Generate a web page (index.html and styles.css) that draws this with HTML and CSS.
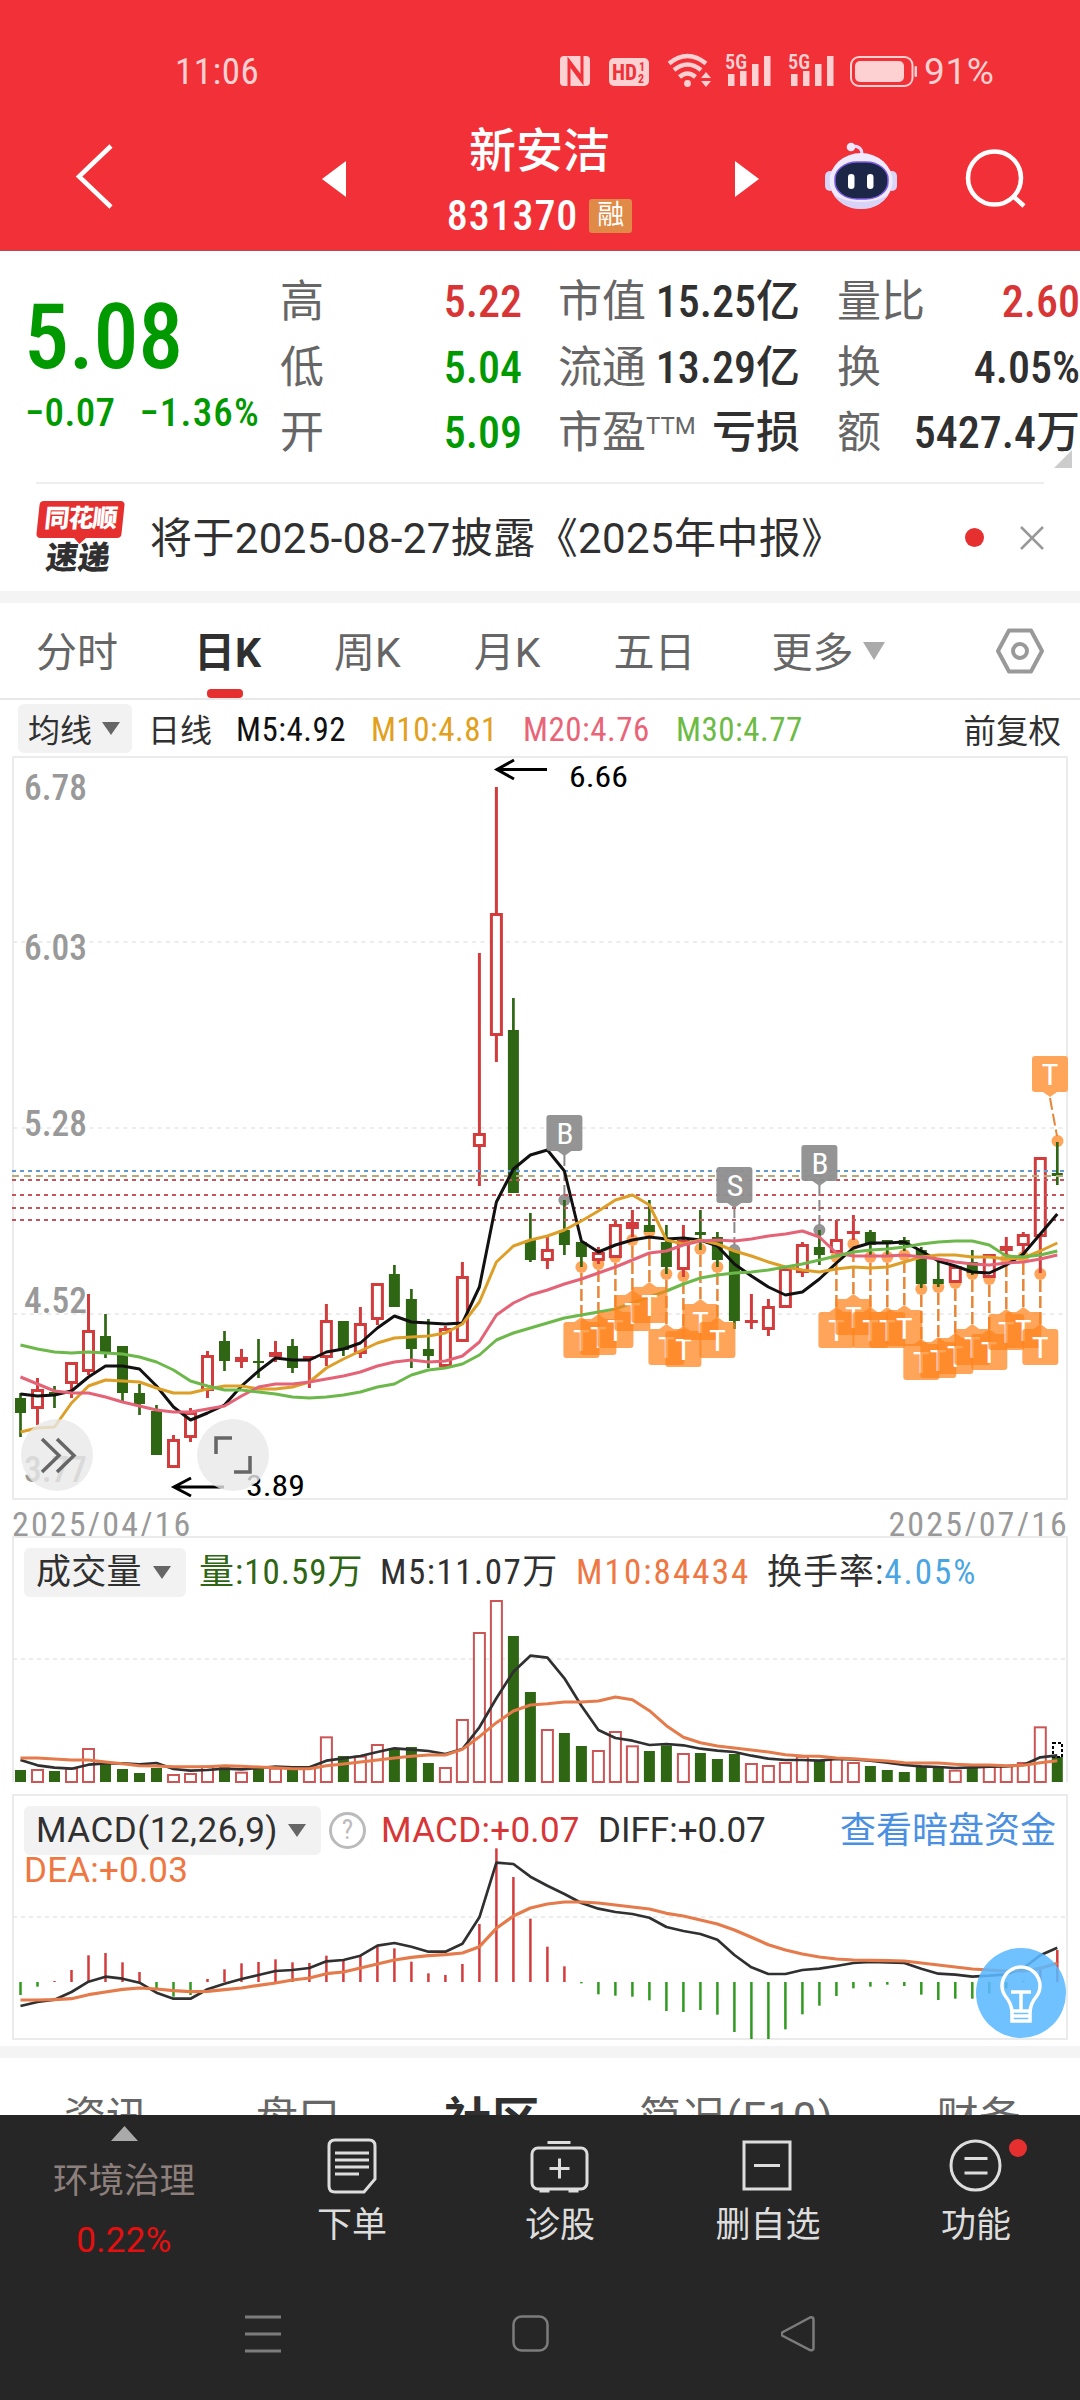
FILE: index.html
```html
<!DOCTYPE html>
<html lang="zh-CN">
<head>
    <meta charset="UTF-8">
    <meta name="viewport" content="width=device-width, initial-scale=1.0">
    <title>新安洁 831370</title>
    <link rel="stylesheet" href="styles.css">
</head>
<body>
    <div class="top">
        <div class="status-bar">
            <span class="time">11:06</span>
            <svg class="status-icons" width="360" height="40" viewBox="558 50 360 40">
                <g fill="#fdd0d2">
                    <rect x="560" y="56" width="30" height="30" rx="4"/>
                    <rect x="609" y="58" width="40" height="28" rx="5"/>
                    <circle cx="687.500" cy="83.500" r="3.400"/>
                    <path d="M701 78l5-6 5 6zM701 81l5 6 5-6z"/>
                    <path d="M728 74h6.500v12h-6.500zM740 71h6.500v15h-6.500zM752 64h6.500v22h-6.500zM764 56h6.500v30h-6.500z"/>
                    <path d="M791 74h6.500v12h-6.500zM803 71h6.500v15h-6.500zM815 64h6.500v22h-6.500zM827 56h6.500v30h-6.500z"/>
                    <rect x="855" y="61" width="49" height="21" rx="5"/>
                    <rect x="914.500" y="66" width="2.500" height="11" rx="1"/>
                    <g font-size="20" font-weight="600">
                        <text x="725" y="69" textLength="22" lengthAdjust="spacingAndGlyphs">5G</text>
                        <text x="788" y="69" textLength="22" lengthAdjust="spacingAndGlyphs">5G</text>
                    </g>
                </g>
                <g fill="none" stroke="#fdd0d2">
                    <rect x="851" y="57" width="61.500" height="29" rx="8" stroke-width="2"/>
                    <path d="M669 63.500q18.500-15 37 0M674 70q13.500-11 27 0M679.500 77q8-7 16 0" stroke-width="4.500"/>
                </g>
                <path d="M569 86V61l12 16M582 56v25l-11-15" fill="none" stroke="#f13037" stroke-width="3"/>
                <g fill="#f13037" font-weight="700">
                    <text x="612" y="80" font-size="22" textLength="25" lengthAdjust="spacingAndGlyphs">HD</text>
                    <text x="639" y="71" font-size="12">1</text>
                    <text x="638" y="83" font-size="12">2</text>
                </g>
            </svg>
            <span class="battery">91%</span>
        </div>
        <div class="title-bar">
            <svg class="back" width="40" height="68" viewBox="75 142 40 68"><path d="M111 146L79 176.500 111 207" fill="none" stroke="#fff" stroke-width="4.500"/></svg>
            <svg class="prev" width="24" height="36"><path d="M24 0v36L0 18z" fill="#fff"/></svg>
            <div class="stock">
                <div class="stock-name">新安洁</div>
                <div class="stock-code"><span class="code">831370</span><span class="badge">融</span></div>
            </div>
            <svg class="next" width="24" height="36"><path d="M0 0v36l24-18z" fill="#fff"/></svg>
            <svg class="robot" width="74" height="70" viewBox="824 142 74 70">
                <path d="M862 154q0-8-9-8" fill="none" stroke="#e6d9fb" stroke-width="3"/>
                <circle cx="851" cy="147" r="4.300" fill="#f0e8ff"/>
                <rect x="825" y="171" width="10" height="20" rx="5" fill="#d9d5f8"/>
                <rect x="887" y="171" width="10" height="20" rx="5" fill="#d9d5f8"/>
                <ellipse cx="861" cy="181" rx="31.500" ry="28" fill="#efeafd"/>
                <path d="M834 195q9 14 27 14t27-14q-11 7-27 7t-27-7z" fill="#d8d2f6"/>
                <rect x="835" y="162" width="53" height="37" rx="22" ry="17" fill="#1c2748" stroke="#7d5be0" stroke-width="1.500"/>
                <rect x="848" y="174" width="6.500" height="15" rx="3.200" fill="#fff"/>
                <rect x="867" y="174" width="6.500" height="15" rx="3.200" fill="#fff"/>
            </svg>
            <svg class="search" width="64" height="64" viewBox="963 147 64 64"><g fill="none" stroke="#fff" stroke-width="4.500"><circle cx="994.500" cy="178" r="26.500"/><path d="M1013 196l11 10"/></g></svg>
        </div>
    </div>

    <div class="quote">
        <div class="price-box">
            <div class="price">5.08</div>
            <div class="change"><span>−0.07</span><span>−1.36%</span></div>
        </div>
        <div class="col col-1">
            <div class="item"><span class="label">高</span><b class="red">5.22</b></div>
            <div class="item"><span class="label">低</span><b class="green">5.04</b></div>
            <div class="item"><span class="label">开</span><b class="green">5.09</b></div>
        </div>
        <div class="col col-2">
            <div class="item"><span class="label">市值</span><b>15.25亿</b></div>
            <div class="item"><span class="label">流通</span><b>13.29亿</b></div>
            <div class="item"><span class="label">市盈<sup>TTM</sup></span><b>亏损</b></div>
        </div>
        <div class="col col-3">
            <div class="item"><span class="label">量比</span><b class="red">2.60</b></div>
            <div class="item"><span class="label">换</span><b>4.05%</b></div>
            <div class="item"><span class="label">额</span><b>5427.4万</b></div>
        </div>
        <div class="corner"></div>
    </div>

    <div class="news">
        <div class="logo">
            <div class="logo-top">同花顺</div>
            <div class="logo-bottom">速递</div>
        </div>
        <div class="news-text">将于2025-08-27披露《2025年中报》</div>
        <span class="news-dot"></span>
        <svg width="24" height="24"><path d="M1 1l22 22M23 1L1 23" stroke="#999" stroke-width="2.500"/></svg>
    </div>

    <div class="tabs">
        <span class="tab t1">分时</span>
        <span class="tab t2 active">日K</span>
        <span class="tab t3">周K</span>
        <span class="tab t4">月K</span>
        <span class="tab t5">五日</span>
        <span class="tab t6">更多</span>
        <svg class="more" width="22" height="18"><path d="M0 0h22L11 18z" fill="#aaa"/></svg>
        <svg class="gear" width="50" height="46" viewBox="0 0 50 46"><g fill="none" stroke="#999" stroke-width="4"><path d="M14 2.500h22L47 23 36 43.500H14L3 23z" stroke-linejoin="round"/><circle cx="25" cy="23" r="7"/></g></svg>
    </div>

    <div class="ma-row">
        <span class="pill">均线<svg width="18" height="13"><path d="M0 0h18L9 13z" fill="#666"/></svg></span>
        <span class="ma-type">日线</span>
        <span class="ma m5">M5:4.92</span>
        <span class="ma m10">M10:4.81</span>
        <span class="ma m20">M20:4.76</span>
        <span class="ma m30">M30:4.77</span>
        <span class="fq">前复权</span>
    </div>

    <div class="chart kline"><svg id="kline" width="1080" height="745" viewBox="0 756 1080 745"></svg></div>

    <div class="dates"><span>2025/04/16</span><span>2025/07/16</span></div>

    <div class="chart volume">
        <svg id="volume" width="1080" height="250" viewBox="0 1536 1080 250"></svg>
        <div class="legend">
            <span class="pill"><span>成交量</span><svg width="18" height="13"><path d="M0 0h18L9 13z" fill="#666"/></svg></span>
            <span class="v1">量:10.59万</span>
            <span class="v2">M5:11.07万</span>
            <span class="v3">M10:84434</span>
            <span class="v4">换手率:<em>4.05%</em></span>
        </div>
    </div>

    <div class="chart macd">
        <svg id="macd" width="1080" height="248" viewBox="0 1794 1080 248"></svg>
        <div class="legend">
            <span class="pill"><span>MACD(12,26,9)</span><svg width="18" height="13"><path d="M0 0h18L9 13z" fill="#666"/></svg></span>
            <span class="help">?</span>
            <span class="d1">MACD:+0.07</span>
            <span class="d2">DIFF:+0.07</span>
            <span class="link">查看暗盘资金</span>
        </div>
        <div class="dea">DEA:+0.03</div>
        <div class="bulb">
            <svg width="90" height="90" viewBox="976 1948 90 90"><g fill="none" stroke="#fff" stroke-width="3.500"><path d="M1012 2011q-1-8-6-14-4-5-4-11a19 19 0 0 1 38 0q0 6-4 11-5 6-6 14z"/><path d="M1012 2011v10h18v-10M1012 2016h18M1021 2011v-19M1011 1992h20"/></g></svg>
        </div>
    </div>

    <div class="sub-tabs">
        <span class="s1">资讯</span>
        <span class="s2">盘口</span>
        <span class="s3">社区</span>
        <span class="s4">简况(F10)</span>
        <span class="s5">财务</span>
    </div>

    <div class="bottom">
        <div class="actions">
            <div class="sector">
                <svg width="27" height="15"><path d="M0 15L13.500 0 27 15z" fill="#aaa"/></svg>
                <div class="sector-name">环境治理</div>
                <div class="sector-pct">0.22%</div>
            </div>
            <div class="action a1">
                <svg width="60" height="60" viewBox="322 2135 60 60"><g fill="none" stroke="#ddd" stroke-width="3"><path d="M335 2140h34q6 0 6 6v33l-11 13h-29q-6 0-6-6v-40q0-6 6-6z"/><path d="M335 2153h34M335 2160h34M335 2167h34M335 2174h24"/></g></svg>
                <span>下单</span>
            </div>
            <div class="action a2">
                <svg width="60" height="60" viewBox="530.500 2135 60 60"><g fill="none" stroke="#ddd" stroke-width="3"><rect x="532.500" y="2148" width="55" height="41" rx="6"/><path d="M548 2142.500h23M550 2168.500h20M560 2158.500v20M540 2191h10M569 2191h10"/></g></svg>
                <span>诊股</span>
            </div>
            <div class="action a3">
                <svg width="60" height="60" viewBox="738 2135 60 60"><g fill="none" stroke="#ddd" stroke-width="3"><path d="M744 2142h46v47h-46zM754 2165.500h26"/></g></svg>
                <span>删自选</span>
            </div>
            <div class="action a4">
                <svg width="60" height="60" viewBox="945.500 2135 60 60"><g fill="none" stroke="#ddd" stroke-width="3"><circle cx="975" cy="2165.500" r="24.500"/><path d="M964 2158.500h23M964 2173h23"/></g></svg>
                <span>功能</span>
                <i class="red-dot"></i>
            </div>
        </div>
        <div class="nav">
            <svg width="36" height="38"><path d="M0 2h36M0 19h36M0 36h36" stroke="#7c7c7c" stroke-width="3"/></svg>
            <svg width="38" height="38"><rect x="1.500" y="1.500" width="34" height="34" rx="8" fill="none" stroke="#7c7c7c" stroke-width="2.500"/></svg>
            <svg width="38" height="38"><path d="M29 2.500L2 17q-3 2 0 4l27 14q3.500 1 3.500-2V5q0-3.500-3.500-2.500z" fill="none" stroke="#7c7c7c" stroke-width="2.500"/></svg>
        </div>
    </div>

    <script src="charts.js"></script>
</body>
</html>
```

FILE: styles.css
```css
* {
    box-sizing: border-box;
}
body {
    margin: 0;
    width: 1080px;
    height: 2400px;
    overflow: hidden;
    background: #fff;
    color: #303030;
    font-family: Roboto, "Noto Sans CJK SC", sans-serif;
    font-stretch: 85%;
    white-space: nowrap;
}
svg {
    display: block;
    flex: none;
}
i, em {
    font-style: normal;
}

/* header */
.top {
    height: 251px;
    background: #f13037;
    color: #fff;
    border-bottom: 1px solid #b94a50;
}
.status-bar {
    height: 110px;
    display: flex;
    align-items: flex-start;
    padding-top: 50px;
    color: #fdd0d2;
    font-size: 37px;
    line-height: 43px;
}
.time {
    width: 383px;
    margin-left: 175px;
    letter-spacing: 0.5px;
}
.battery {
    margin-left: 6px;
    font-stretch: 95%;
    letter-spacing: 0.6px;
}
.title-bar {
    display: flex;
    align-items: flex-start;
}
.back {
    margin: 32px 0 0 75px;
}
.prev {
    margin: 51px 0 0 207px;
}
.stock {
    width: 389px;
    text-align: center;
}
.stock-name {
    height: 80px;
    margin-left: -2px;
    line-height: 81px;
    font-size: 47px;
    font-weight: 500;
}
.stock-code {
    display: flex;
    justify-content: center;
    align-items: center;
    height: 50px;
    padding-top: 1px;
    gap: 11px;
    margin-left: -2px;
}
.code {
    font-size: 42px;
    font-weight: 500;
    letter-spacing: 0.9px;
}
.badge {
    width: 43px;
    height: 34px;
    line-height: 33px;
    border-radius: 3px;
    background: #e08a48;
    font-size: 27px;
}
.next {
    margin-top: 51px;
}
.robot {
    margin: 32px 0 0 65px;
}
.search {
    margin: 37px 0 0 65px;
}

/* quote */
.quote {
    position: relative;
    display: flex;
    height: 233px;
    padding-top: 18px;
}
.quote::after {
    content: "";
    position: absolute;
    left: 36px;
    right: 36px;
    bottom: 0;
    height: 2px;
    background: #eee;
}
.price-box {
    width: 280px;
    padding-left: 24px;
    color: #009900;
    font-weight: 500;
}
.price {
    height: 110px;
    line-height: 137px;
    font-size: 90px;
    letter-spacing: -0.3px;
}
.change {
    display: flex;
    gap: 24px;
    padding: 12px 0 0 1px;
    font-size: 39px;
    line-height: 44px;
    letter-spacing: 0.4px;
}
.change span + span {
    letter-spacing: 1.2px;
}
.col {
    font-size: 44px;
}
.col-1 {
    width: 242px;
}
.col-2 {
    width: 242px;
    margin-left: 36px;
}
.col-3 {
    width: 243px;
    margin-left: 37px;
}
.item {
    display: flex;
    justify-content: space-between;
    height: 65.5px;
    line-height: 66px;
}
.item .label {
    color: #666;
}
.item b {
    font-weight: 500;
}
.item sup {
    font-size: 24px;
    font-stretch: 100%;
    line-height: 0;
    vertical-align: 14px;
}
.red {
    color: #d83636;
}
.green {
    color: #009900;
}
.corner {
    position: absolute;
    right: 8px;
    bottom: 16px;
    border-left: 18px solid transparent;
    border-bottom: 18px solid #ccc;
}

/* news */
.news {
    display: flex;
    align-items: center;
    height: 119px;
    padding: 0 36px;
    border-bottom: 12px solid #f4f4f4;
}
.logo {
    width: 89px;
    height: 73px;
    text-align: center;
}
.logo-top {
    position: relative;
    width: 85px;
    height: 37px;
    margin-left: 2px;
    border-radius: 4px;
    background: #e63030;
    color: #fff;
    font-size: 25px;
    font-weight: 900;
    line-height: 35px;
    letter-spacing: -1px;
    transform: skewX(-6deg);
}
.logo-top::after {
    content: "";
    position: absolute;
    left: 38px;
    top: 37px;
    border: 6px solid transparent;
    border-top-color: #e63030;
    border-bottom: 0;
}
.logo-bottom {
    margin-left: -5px;
    font-size: 32px;
    font-weight: 900;
    line-height: 41px;
    transform: skewX(-7deg);
}
.news-text {
    width: 815px;
    margin: -7px 0 0 25px;
    font-size: 42px;
    font-stretch: 100%;
    letter-spacing: 0.4px;
}
.news-dot {
    width: 19px;
    height: 19px;
    margin-right: 36px;
    border-radius: 50%;
    background: #e63030;
}

/* period tabs */
.tabs {
    display: flex;
    align-items: center;
    height: 97px;
    padding: 0 36px;
    border-bottom: 2px solid #e8e8e8;
    color: #666;
    font-size: 41px;
    font-stretch: 100%;
}
.tab {
    margin-top: -3px;
}
.t2, .t6 {
    margin-left: 76px;
}
.t3, .t4, .t5 {
    margin-left: 73px;
}
.tab.active {
    position: relative;
    color: #303030;
    font-weight: 700;
}
.tab.active::after {
    content: "";
    position: absolute;
    left: 13px;
    bottom: -19px;
    width: 36px;
    height: 9px;
    border-radius: 4px;
    background: #e63030;
}
.more {
    margin-left: 9px;
}
.gear {
    margin: 0 -1px 0 auto;
}

/* moving average legend */
.ma-row {
    display: flex;
    align-items: center;
    height: 56px;
    padding: 0 19px 0 18px;
    font-size: 32px;
}
.pill {
    display: flex;
    align-items: center;
    justify-content: space-between;
    height: 49px;
    padding: 0 12px;
    border-radius: 6px;
    background: #f2f2f2;
}
.ma-row .pill {
    width: 114px;
    padding: 0 12px 0 10px;
}
.ma-type {
    width: 88px;
    margin-left: 16px;
}
.ma {
    width: 135px;
    padding-top: 2px;
    font-size: 33px;
    font-weight: 450;
    letter-spacing: 0.5px;
}
.m5 { color: #111; }
.m10 { color: #e2a01c; width: 152px; }
.m20 { color: #ea6478; width: 153px; }
.m30 { color: #6cbb45; width: 153px; }
.fq {
    margin-left: auto;
    font-size: 32.5px;
}

/* charts */
.chart {
    position: relative;
}
.chart > svg {
    position: absolute;
    left: 0;
    top: 0;
}
.kline {
    height: 745px;
}
.dates {
    display: flex;
    justify-content: space-between;
    height: 35px;
    padding: 3px 11px 0 12px;
    color: #999;
    font-size: 34px;
    letter-spacing: 2.1px;
    line-height: 41px;
}
.volume {
    height: 258px;
    padding: 12px 0 0 24px;
}
.macd {
    height: 264px;
    padding: 12px 24px 0;
    border-bottom: 12px solid #f4f4f4;
}
.legend {
    position: relative;
    display: flex;
    align-items: center;
    font-size: 35px;
    line-height: 40px;
}
.volume .pill {
    width: 162px;
    padding-right: 15px;
    letter-spacing: 0.2px;
}
.macd .pill {
    width: 297px;
    padding-right: 15px;
    font-stretch: 100%;
    letter-spacing: 0.5px;
}
.volume .legend {
    letter-spacing: 1px;
}
.v1 { width: 181px; margin-left: 13px; color: #2f6614; }
.v2 { width: 196px; letter-spacing: 1.5px; }
.v3 { width: 191px; color: #ee7742; letter-spacing: 2.1px; }
.v4 em { color: #4aa5e2; letter-spacing: 2px; }
.help {
    width: 37px;
    height: 37px;
    margin-left: 8px;
    border: 3px solid #bbb;
    border-radius: 50%;
    color: #bbb;
    font-size: 27px;
    line-height: 31px;
    text-align: center;
}
.d1 { width: 217px; margin-left: 15px; color: #d83636; letter-spacing: 0.3px; }
.d1, .d2, .dea {
    font-stretch: 100%;
}
.link {
    margin-left: auto;
    color: #4a90e2;
    font-size: 36px;
}
.dea {
    position: relative;
    color: #ee7742;
    font-size: 35px;
    letter-spacing: 0.2px;
    line-height: 32px;
}
.bulb {
    position: absolute;
    left: 976px;
    top: 154px;
    width: 90px;
    height: 90px;
    border-radius: 50%;
    background: rgba(90, 184, 255, 0.87);
}

/* content tabs, cut off by the bottom bar */
.sub-tabs {
    position: relative;
    display: flex;
    height: 57px;
    padding: 30px 0 0 64px;
    overflow: hidden;
    color: #666;
    font-size: 42px;
    font-stretch: 100%;
    line-height: 60px;
}
.s2 { margin-left: 108px; }
.s3 { margin-left: 104px; color: #303030; font-size: 48px; font-weight: 700; line-height: 65px; }
.s4 { margin-left: 99px; letter-spacing: 1.7px; }
.s5 { margin-left: 102px; }

/* bottom bar */
.bottom {
    height: 285px;
    background: #262626;
    color: #ddd;
}
.actions {
    display: flex;
    height: 200px;
    font-size: 35px;
}
.sector {
    display: flex;
    flex-direction: column;
    align-items: center;
    width: 248px;
    padding-top: 11px;
}
.sector-name {
    margin-top: 14px;
    color: #8d7f7b;
    font-size: 35.5px;
    line-height: 52px;
}
.sector-pct {
    margin-top: 8px;
    color: #e60f0f;
    font-stretch: 100%;
    letter-spacing: 0.3px;
    line-height: 52px;
}
.action {
    position: relative;
    display: flex;
    flex-direction: column;
    align-items: center;
    width: 208px;
    padding-top: 20px;
}
.action span {
    line-height: 61px;
}
.red-dot {
    position: absolute;
    left: 137px;
    top: 24px;
    width: 18px;
    height: 18px;
    border-radius: 50%;
    background: #e63030;
}
.nav {
    display: flex;
    gap: 231px;
    padding-left: 245px;
}
```

FILE: charts.js
```js
var STEP = 16.997;
var RED = '#d23c3c', GREEN = '#2f6614';

function x(i) {
    return +(20.5 + i * STEP).toFixed(1);
}
function line(x1, y1, x2, y2, color, w, dash) {
    return '<line x1="' + x1 + '" y1="' + y1 + '" x2="' + x2 + '" y2="' + y2 + '" stroke="' + color + '" stroke-width="' + w + '"' + (dash ? ' stroke-dasharray="' + dash + '"' : '') + '/>';
}
function rect(rx, ry, w, h, attrs) {
    return '<rect x="' + rx + '" y="' + ry + '" width="' + w + '" height="' + h + '" ' + attrs + '/>';
}
function curve(values, toY, color, w) {
    var pts = values.map(function (v, i) { return x(i) + ',' + toY(v).toFixed(1); }).join(' ');
    return '<polyline points="' + pts + '" fill="none" stroke="' + color + '" stroke-width="' + w + '" stroke-linejoin="round"/>';
}
function text(tx, ty, str, size, width, color, extra) {
    return '<text x="' + tx + '" y="' + ty + '" font-size="' + size + '" fill="' + color + '" textLength="' + width + '" lengthAdjust="spacingAndGlyphs" ' + (extra || '') + '>' + str + '</text>';
}

// candles: up/down, high, body top, body bottom, low
var candles = [
    [0,1393,1398,1413,1437],[1,1378,1389,1409,1425],[0,1386,1392,1394,1408],[1,1362,1362,1384,1398],
    [1,1294,1330,1372,1375],[0,1314,1336,1353,1358],[0,1346,1346,1393,1401],[0,1384,1393,1404,1415],
    [0,1405,1411,1455,1455],[1,1435,1439,1468,1468],[1,1408,1412,1438,1442],[1,1351,1355,1391,1398],
    [0,1331,1341,1361,1371],[1,1349,1357,1362,1368],[0,1339,1361,1363,1378],[1,1341,1352,1357,1362],
    [0,1339,1346,1368,1373],[1,1356,1356,1358,1388],[1,1304,1320,1358,1366],[0,1321,1321,1350,1356],
    [1,1307,1323,1354,1358],[1,1283,1283,1320,1325],[0,1265,1274,1307,1307],[0,1289,1299,1349,1368],
    [0,1319,1349,1356,1368],[1,1326,1328,1367,1367],[1,1262,1276,1342,1342],[1,953,1133,1147,1186],
    [1,787,913,1036,1062],[0,998,1030,1193,1193],[0,1213,1240,1260,1262],[1,1237,1249,1261,1269],
    [0,1200,1230,1245,1255],[0,1242,1242,1257,1267],[1,1247,1252,1261,1264],[1,1220,1224,1258,1258],
    [1,1210,1222,1229,1237],[0,1200,1225,1232,1232],[0,1225,1242,1267,1274],[1,1225,1240,1270,1277],
    [0,1210,1232,1235,1250],[0,1232,1237,1260,1267],[0,1251,1251,1321,1329],[1,1294,1320,1322,1329],
    [1,1299,1306,1330,1336],[1,1268,1268,1308,1308],[1,1242,1244,1273,1277],[0,1230,1247,1255,1265],
    [1,1220,1239,1253,1253],[1,1215,1231,1233,1240],[0,1230,1232,1245,1255],[0,1240,1240,1242,1255],
    [0,1237,1240,1245,1251],[0,1247,1250,1284,1288],[0,1262,1279,1284,1287],[1,1265,1266,1283,1283],
    [0,1250,1262,1273,1275],[1,1254,1254,1278,1278],[1,1237,1246,1251,1255],[1,1232,1234,1246,1255],
    [1,1157,1157,1237,1273],[0,1142,1173,1176,1185]
];
var m5 = [1394,1396,1395,1391,1377,1366,1366,1369,1386,1407,1420,1413,1405,1386,1371,1358,1360,1360,1352,1349,1343,1328,1316,1322,1323,1324,1323,1287,1202,1169,1155,1150,1171,1241,1252,1245,1240,1237,1239,1238,1240,1246,1264,1276,1287,1295,1292,1279,1263,1248,1243,1243,1242,1251,1261,1266,1272,1273,1265,1254,1234,1214];
var m10 = [1432,1428,1427,1403,1386,1380,1381,1382,1388,1393,1393,1389,1386,1386,1389,1389,1387,1382,1368,1359,1351,1343,1338,1337,1336,1333,1324,1302,1262,1246,1240,1236,1230,1221,1211,1200,1195,1205,1240,1244,1240,1244,1251,1256,1262,1267,1270,1272,1269,1267,1268,1267,1262,1257,1255,1255,1257,1257,1259,1258,1251,1243];
var m20 = [1377,1384,1391,1393,1393,1397,1402,1406,1410,1412,1412,1409,1406,1396,1387,1384,1384,1382,1379,1376,1372,1366,1362,1360,1362,1361,1356,1342,1315,1303,1295,1290,1284,1279,1273,1267,1260,1253,1251,1245,1241,1240,1241,1239,1236,1234,1231,1237,1253,1256,1256,1256,1255,1257,1259,1262,1264,1265,1263,1262,1259,1255];
var m30 = [1345,1349,1352,1353,1352,1353,1354,1357,1362,1370,1381,1386,1390,1390,1392,1394,1397,1398,1397,1395,1392,1387,1384,1375,1370,1368,1364,1355,1340,1333,1328,1323,1318,1315,1312,1309,1303,1297,1291,1284,1278,1275,1273,1272,1270,1267,1264,1260,1256,1252,1250,1249,1247,1244,1242,1241,1241,1245,1256,1257,1255,1251];
// T marks below the candles: index, dot y
var tMarks = [[33,1267],[34,1264],[35,1257],[36,1240],[37,1232],[38,1274],[39,1276],[40,1249],[41,1267],[48,1257],[49,1244],[50,1257],[51,1257],[52,1255],[53,1289],[54,1287],[55,1283],[56,1274],[57,1279],[58,1259],[59,1257],[60,1274]];
// B / S marks above: index, box top, dot y, letter
var sideMarks = [[32,1115,1200,'B'],[42,1167,1250,'S'],[47,1145,1230,'B']];

function same(v) { return v; }

function drawKline() {
    var s = '';
    [942, 1128, 1314].forEach(function (y) { s += line(13, y, 1067, y, '#e6e6e6', 1.5, '4 4.500'); });
    s += rect(13, 757, 1054, 742, 'fill="none" stroke="#ebebeb" stroke-width="2"');
    [[800,'6.78'],[960,'6.03'],[1136,'5.28'],[1313,'4.52'],[1482,'3.77']].forEach(function (l) {
        s += text(24, l[0], l[1], 37, 63, '#999', 'font-weight="500"');
    });

    tMarks.forEach(function (m) {
        s += '<circle cx="' + x(m[0]) + '" cy="' + m[1] + '" r="6" fill="#ffa55a"/>';
        s += line(x(m[0]), m[1] + 6, x(m[0]), m[1] + 52, '#e88638', 2.5, '12 4');
    });
    sideMarks.forEach(function (m) {
        s += '<circle cx="' + x(m[0]) + '" cy="' + m[2] + '" r="6" fill="#949494"/>';
        s += line(x(m[0]), m[1] + 40, x(m[0]), m[2] - 5, '#8a8a8a', 2, '11 4');
    });
    s += '<circle cx="1057.500" cy="1141" r="6" fill="#ffa55a"/>' + line(1050, 1098, 1057, 1136, '#e88638', 2, '12 4');

    candles.forEach(function (c, i) {
        var cx = x(i), h = c[3] - c[2];
        if (c[0]) {
            s += line(cx, c[1], cx, c[2], RED, 3) + line(cx, c[3], cx, c[4], RED, 3);
            if (h < 8) s += rect(cx - 6.5, c[2], 13, Math.max(h, 3), 'fill="' + RED + '"');
            else s += rect(cx - 5, c[2] + 1.5, 10, h - 3, 'fill="#fff" stroke="' + RED + '" stroke-width="3"');
        } else {
            s += line(cx, c[1], cx, c[4], GREEN, 2.7);
            s += rect(cx - 5.5, c[2], 11, h, 'fill="' + GREEN + '"');
        }
    });
    s += line(12, 1171, 1065, 1171, '#6499d2', 2, '4 4');
    s += line(12, 1176, 1065, 1176, '#b8a97c', 2, '7 5');
    [1180, 1195, 1208, 1220].forEach(function (y) { s += line(12, y, 1065, y, '#c6545c', 2, '4 4'); });
    s += curve(m5, same, '#111', 3) + curve(m10, same, '#dd9f28', 3) + curve(m20, same, '#e56376', 3) + curve(m30, same, '#6db84b', 3);

    tMarks.forEach(function (m) {
        var cx = x(m[0]), top = m[1] + 55;
        s += '<path d="M' + (cx - 7) + ' ' + top + 'l7-5 7 5z" fill="#ff821a" fill-opacity="0.72"/>';
        s += rect(cx - 18, top, 36, 36, 'rx="3" fill="#ff821a" fill-opacity="0.72"');
        s += text(cx - 8.5, top + 29, 'T', 30, 17, '#fff');
    });
    sideMarks.forEach(function (m) {
        var cx = x(m[0]);
        s += rect(cx - 18, m[1], 36, 36, 'rx="3" fill="#909090" fill-opacity="0.96"');
        s += '<path d="M' + (cx - 7) + ' ' + (m[1] + 36) + 'l7 5 7-5z" fill="#949494"/>';
        s += text(cx - 8, m[1] + 29, m[3], 30, 17, '#fff');
    });
    s += rect(1032, 1056, 36, 36, 'rx="3" fill="#ffa55a"') + '<path d="M1043 1092l7 5 7-5z" fill="#ffa55a"/>' + text(1041.5, 1085, 'T', 30, 17, '#fff');

    // extremes
    s += '<path d="M547 769.500H497M514 760l-17 9.500 17 9.500" fill="none" stroke="#000" stroke-width="3"/>' + text(569, 787, '6.66', 29, 59, '#000');
    s += '<path d="M224 1487H174M191 1478l-17 9 17 9" fill="none" stroke="#000" stroke-width="3"/>' + text(246, 1496, '3.89', 29, 59, '#000');
    s += '<g fill="#e8e8e8" fill-opacity="0.8"><circle cx="57" cy="1455" r="36"/><circle cx="233" cy="1455" r="36"/></g>';
    s += '<path d="M42 1439l17 16.500-17 16.500M57 1439l17 16.500-17 16.500M216 1454v-16h16M250 1456v16h-16" fill="none" stroke="#666" stroke-width="3.500"/>';
    document.getElementById('kline').innerHTML = s;
}

var volumes = [810,810,813,806,747,792,807,819,804,825,822,800,800,818,800,806,806,803,712,768,770,735,745,741,789,804,660,399,303,408,576,690,699,738,753,696,739,753,736,762,759,777,762,792,798,789,770,780,777,789,798,810,816,800,803,812,803,800,798,789,682,768];
var v5 = [780,796,803,806,794,790,790,793,789,807,812,810,806,808,804,800,802,802,782,775,768,756,745,749,753,762,747,682,595,515,467,473,535,617,690,714,722,735,732,736,746,752,756,767,776,780,780,782,777,778,782,788,795,799,801,804,802,800,799,795,772,766];
var v10 = [774,774,777,780,780,786,791,797,798,800,800,800,797,799,801,803,806,806,797,792,786,780,774,769,765,765,748,710,668,633,615,611,606,606,603,591,599,632,677,712,728,738,744,750,756,764,768,769,774,776,780,783,788,789,789,793,795,795,797,796,788,782];
function drawVolume() {
    var y = function (v) { return 1500 + v / 3; };
    var s = line(13, 1659, 1067, 1659, '#e6e6e6', 1.5, '4 4');
    s += '<path d="M13 1782V1537H1067V1782" fill="none" stroke="#ebebeb" stroke-width="2"/>';
    volumes.forEach(function (v, i) {
        var top = y(v);
        if (candles[i][0]) s += rect(x(i) - 5.5, top, 11, 1782 - top, 'fill="#fff" stroke="#cc5555" stroke-width="2"');
        else s += rect(x(i) - 5.5, top, 11, 1782 - top, 'fill="' + GREEN + '"');
    });
    s += rect(1053, 1743, 9, 14, 'fill="#fff" stroke="#000" stroke-width="2" stroke-dasharray="3 2"');
    s += curve(v5, y, '#303030', 2.7) + curve(v10, y, '#e57a4a', 3);
    document.getElementById('volume').innerHTML = s;
}

var bars = [645,620,603,570,526,519,547,576,630,650,645,597,568,550,546,538,547,549,527,540,525,500,505,545,580,585,552,432,205,291,416,500,559,610,643,647,650,661,693,696,690,704,756,777,777,748,703,677,648,625,620,614,618,644,660,656,656,640,625,603,560,510];
var diff = [678,666,659,636,605,590,596,608,638,656,656,628,611,597,585,573,570,564,544,540,527,497,489,500,515,515,491,412,248,252,290,317,342,369,386,396,402,413,441,453,462,479,525,562,582,582,570,566,558,549,546,547,549,566,581,584,590,587,583,565,526,503];
var dea = [660,660,659,656,644,636,628,624,627,632,635,634,629,624,616,609,600,594,581,576,564,552,540,532,527,524,519,500,445,408,384,372,366,366,369,375,381,387,400,408,420,432,450,472,494,510,522,531,537,540,541,542,543,549,555,561,567,570,573,573,565,550];
function drawMacd() {
    var y = function (v) { return 1780 + v / 3; };
    var s = line(13, 1917, 1067, 1917, '#e6e6e6', 1.5, '4 4');
    s += rect(13, 1795, 1054, 244, 'fill="none" stroke="#ebebeb" stroke-width="2"');
    bars.forEach(function (v, i) {
        s += line(x(i), 1982, x(i), y(v), v < 606 ? '#d23c3c' : '#2f9920', 2.5);
    });
    s += curve(diff, y, '#303030', 2.7) + curve(dea, y, '#e57a4a', 3.2);
    document.getElementById('macd').innerHTML = s;
}

drawKline();
drawVolume();
drawMacd();
```
